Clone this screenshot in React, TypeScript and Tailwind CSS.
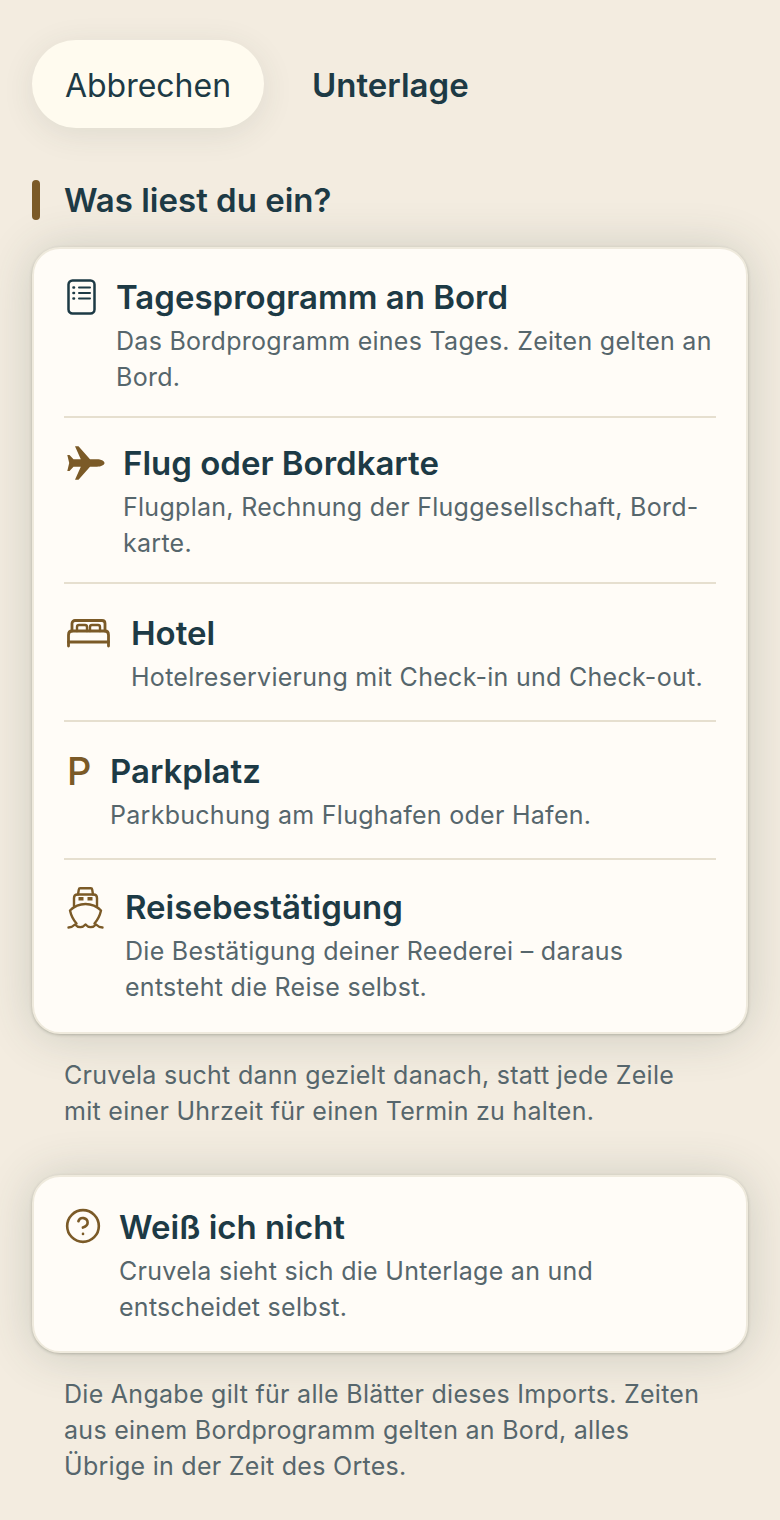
import type { ReactNode } from "react";
import { CircleHelp } from "lucide-react";

function DocIcon() {
  return (
    <svg width="29" height="36" viewBox="0 0 29 36" fill="none" stroke="#1d3a45" strokeWidth="2.5" strokeLinecap="round">
      <rect x="1.5" y="1.5" width="26" height="33" rx="4" />
      <path d="M12 8.5H23M12 14H23M12 19.5H23" strokeWidth="2" />
      <path d="M6.5 8.5h.5M6.5 14h.5M6.5 19.5h.5" strokeWidth="2.6" />
    </svg>
  );
}

function PlaneIcon() {
  return (
    <svg width="38" height="34" viewBox="0 0 38 34" fill="#7b5a27">
      <path d="M37.5 17C37.5 15 34 13.3 30 13.3H23L11.5.3H8L13.8 13.3H6.5L2.5 9H.3L2.2 17 .3 25H2.5L6.5 20.7H13.8L8 33.7H11.5L23 20.7H30C34 20.7 37.5 19 37.5 17Z" />
    </svg>
  );
}

function BedIcon() {
  return (
    <svg width="43" height="29" viewBox="0 0 43 29" fill="none" stroke="#7b5a27" strokeWidth="2.8" strokeLinecap="round" strokeLinejoin="round">
      <path d="M5 12V4.5C5 2.5 6.5 1.5 8 1.5H35C36.5 1.5 38 2.5 38 4.5V12" />
      <path d="M10 12V8C10 6.8 10.8 6 12 6H18C19.2 6 20 6.8 20 8V12M23 12V8C23 6.8 23.8 6 25 6H31C32.2 6 33 6.8 33 8V12" strokeWidth="2.4" />
      <path d="M1.5 27V16C1.5 13.5 3 12 5 12H38C40 12 41.5 13.5 41.5 16V27" />
      <path d="M1.5 23H41.5" />
    </svg>
  );
}

function ShipIcon() {
  return (
    <svg width="37" height="42" viewBox="0 0 37 42" fill="none" stroke="#7b5a27" strokeWidth="2.4" strokeLinecap="round" strokeLinejoin="round">
      <path d="M11 7.5L11.8 2.6C11.9 1.8 12.4 1.3 13.2 1.3H23.8C24.6 1.3 25.1 1.8 25.2 2.6L26 7.5" />
      <path d="M7 19V11C7 8.8 8.4 7.5 10.5 7.5H26.5C28.6 7.5 30 8.8 30 11V19" />
      <path d="M18.5 17C13 17 7.5 19 3 23.5C4 28 6 32.5 9.5 36.5M18.5 17C24 17 29.5 19 34 23.5C33 28 31 32.5 27.5 36.5" />
      <path d="M1.5 40.5C4 40.5 6 39.5 8 37.5C11 41 15.5 41 18.5 37.5C21.5 41 26 41 29 37.5C31 39.5 33 40.5 35.5 40.5" />
      <path d="M11.5 11.8H16.5M20.5 11.8H25.5" strokeWidth="3.4" strokeLinecap="butt" />
    </svg>
  );
}

const rows = [
  {
    icon: <DocIcon />,
    iconBox: "w-[32px] pt-[2px]",
    title: "Tagesprogramm an Bord",
    text: "Das Bordprogramm eines Tages. Zeiten gelten an Bord.",
    pad: "pt-[28px] pb-[21px]",
  },
  {
    icon: <PlaneIcon />,
    iconBox: "w-[39px] pt-[3px]",
    title: "Flug oder Bordkarte",
    text: "Flugplan, Rechnung der Fluggesellschaft, Bord-\nkarte.",
    pad: "pt-[25px] pb-[21px]",
  },
  {
    icon: <BedIcon />,
    iconBox: "w-[47px] pt-[6px]",
    title: "Hotel",
    text: "Hotelreservierung mit Check-in und Check-out.",
    pad: "pt-[29px] pb-[25px]",
  },
  {
    icon: (
      <span className="block text-[38px] leading-[40px] font-medium text-[#7b5a27]">P</span>
    ),
    iconBox: "w-[26px]",
    title: "Parkplatz",
    text: "Parkbuchung am Flughafen oder Hafen.",
    pad: "pt-[29px] pb-[25px]",
  },
  {
    icon: <ShipIcon />,
    iconBox: "w-[41px]",
    title: "Reisebestätigung",
    text: "Die Bestätigung deiner Reederei – daraus\nentsteht die Reise selbst.",
    pad: "pt-[27px] pb-[27px]",
  },
];

function Row({ icon, iconBox, title, text, pad }: { icon: ReactNode; iconBox: string; title: string; text: string; pad: string }) {
  return (
    <div className={`flex items-start ${pad}`}>
      <div className={`ml-[3px] shrink-0 ${iconBox}`}>{icon}</div>
      <div className="ml-[17px] min-w-0 flex-1">
        <div className="text-[33px] leading-[40px] font-semibold text-[#1d3a45]">{title}</div>
        <div className="mt-[6px] text-[25px] leading-[36px] tracking-[0.28px] whitespace-pre-line text-[#56666c]">{text}</div>
      </div>
    </div>
  );
}

const cardClass =
  "rounded-[28px] border-2 border-[#efeadd] bg-[#fffcf7] px-[30px] shadow-[0_1px_3px_rgba(70,75,60,0.3),0_2px_48px_rgba(50,70,60,0.2)]";

export default function App() {
  return (
    <div className="min-h-[1520px] bg-[#f3ece0] px-[32px] pt-[40px] font-['Inter',sans-serif]">
      {/* Header */}
      <header className="flex items-center">
        <button
          type="button"
          className="flex h-[88px] w-[232px] items-center justify-center rounded-full bg-[#fffbef] pt-[3px] text-[32px] text-[#1d3a45] shadow-[0_6px_32px_rgba(50,70,60,0.1)]"
        >
          Abbrechen
        </button>
        <h1 className="ml-[48px] pt-[3px] text-[33px] font-semibold text-[#1d3a45]">Unterlage</h1>
      </header>

      {/* Section title */}
      <div className="mt-[52px] flex h-[40px] items-center">
        <div className="h-[40px] w-[8px] rounded-full bg-[#7b5a27]" />
        <h2 className="ml-[24px] pt-[2px] text-[33px] font-semibold text-[#1d3a45]">Was liest du ein?</h2>
      </div>

      {/* Document types */}
      <section className={`mt-[27px] ${cardClass}`}>
        {rows.map((row, i) => (
          <div key={row.title} className={i > 0 ? "border-t-2 border-[#e6dfcf]" : ""}>
            <Row {...row} />
          </div>
        ))}
      </section>

      <p className="mt-[23px] px-[32px] text-[25px] leading-[36px] tracking-[0.28px] text-[#56666c]">
        Cruvela sucht dann gezielt danach, statt jede Zeile mit einer Uhrzeit für einen Termin zu halten.
      </p>

      {/* Unknown */}
      <section className={`mt-[46px] ${cardClass}`}>
        <Row
          icon={<CircleHelp size={38} color="#7b5a27" strokeWidth={1.65} className="-ml-[3px]" />}
          iconBox="w-[35px]"
          title="Weiß ich nicht"
          text={"Cruvela sieht sich die Unterlage an und\nentscheidet selbst."}
          pad="pt-[30px] pb-[26px]"
        />
      </section>

      <p className="mt-[23px] px-[32px] text-[25px] leading-[36px] tracking-[0.28px] text-[#56666c]">
        Die Angabe gilt für alle Blätter dieses Imports. Zeiten aus einem Bordprogramm gelten an Bord, alles Übrige in der Zeit des Ortes.
      </p>
    </div>
  );
}
